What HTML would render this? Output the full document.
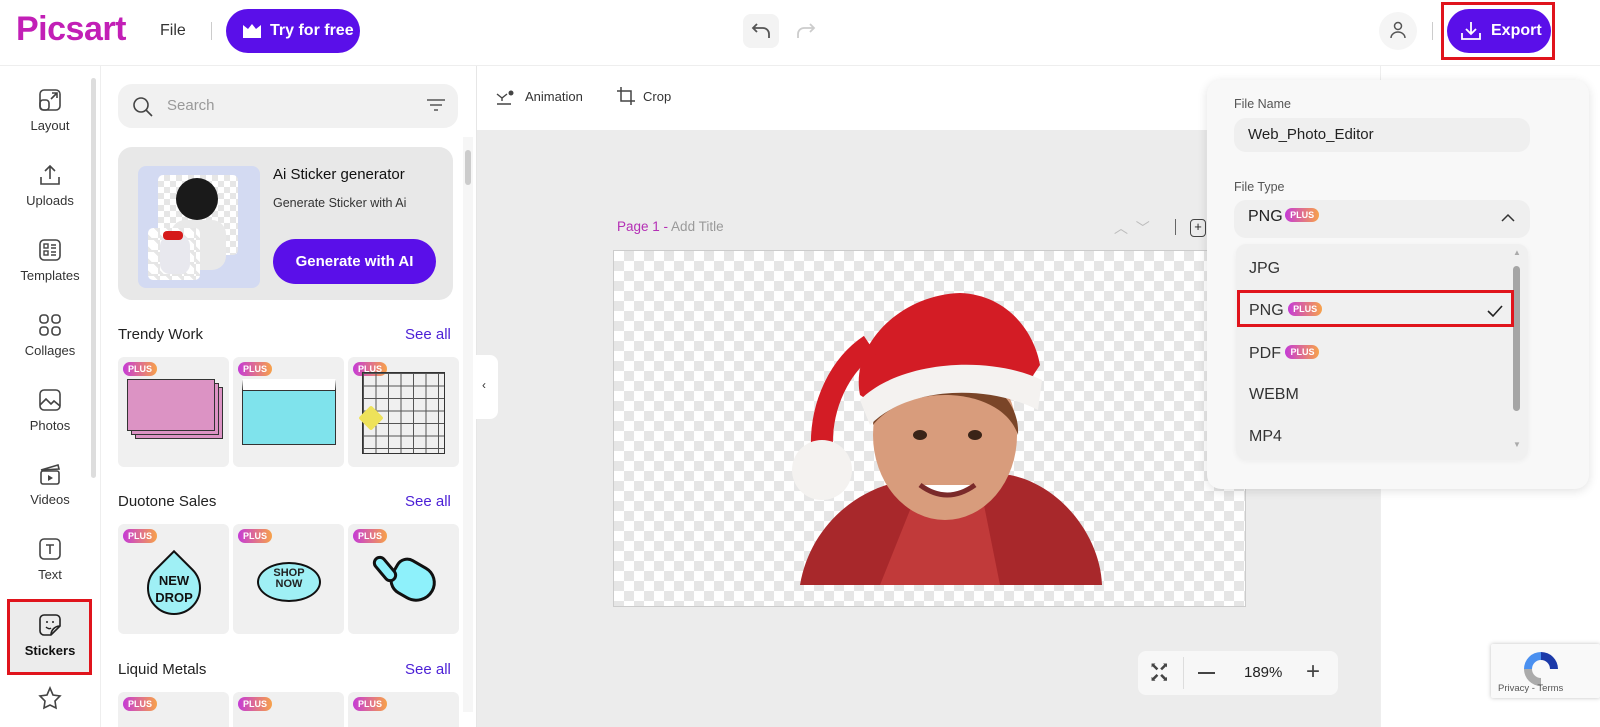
<!DOCTYPE html>
<html style="width:1600px;height:727px;overflow:hidden"><head><meta charset="utf-8"><style>
*{box-sizing:border-box;margin:0;padding:0}
body{width:1600px;height:727px;overflow:hidden;background:#fff;font-family:"Liberation Sans",sans-serif;color:#222;position:relative}
.abs{position:absolute}
.plus{display:inline-block;background:linear-gradient(90deg,#c53bd6,#f7a24a);color:#fff;font-size:9px;font-weight:bold;border-radius:8px;padding:2px 5px;line-height:10px;vertical-align:top}
.nav{position:absolute;left:0;width:100px;text-align:center;font-size:13px;color:#333}
.nav svg{display:block;margin:0 auto 6px}
.card{position:absolute;width:111px;height:110px;background:#f0f0f0;border-radius:6px;overflow:hidden}
.card .plus{position:absolute;left:5px;top:5px}
.sec{position:absolute;left:118px;font-size:15px;color:#222}
.see{position:absolute;left:405px;font-size:15px;color:#4b1fd6}
.chk{background-color:#fff;background-image:linear-gradient(45deg,#e6e6e6 25%,transparent 25%,transparent 75%,#e6e6e6 75%),linear-gradient(45deg,#e6e6e6 25%,transparent 25%,transparent 75%,#e6e6e6 75%);background-size:20px 20px;background-position:0 0,10px 10px}
.opt{position:absolute;left:1249px;font-size:16px;color:#333}
</style></head><body>
<div class="abs" style="left:0;top:0;width:1600px;height:66px;border-bottom:1px solid #eee;background:#fff"></div>
<div class="abs" style="left:16px;top:10px;font-size:34px;font-weight:bold;color:#c21fb6;letter-spacing:-0.5px">Picsart</div>
<div class="abs" style="left:160px;top:22px;font-size:16px;color:#333">File</div>
<div class="abs" style="left:211px;top:22px;width:1px;height:18px;background:#ccc"></div>
<div class="abs" style="left:226px;top:9px;width:134px;height:44px;border-radius:22px;background:#5a0fe9;color:#fff;font-weight:bold;font-size:16px;line-height:44px;padding-left:44px">Try for free</div>
<svg class="abs" style="left:242px;top:23px" width="20" height="16"><path d="M1 2l5 4 4-5 4 5 5-4v13H1z" fill="#fff"/></svg>
<div class="abs" style="left:743px;top:14px;width:36px;height:34px;border-radius:8px;background:#f3f3f3"></div>
<svg class="abs" style="left:751px;top:21px" width="22" height="20"><path d="M6 3L2 7l4 4M2 7h10a6 6 0 016 6v4" fill="none" stroke="#555" stroke-width="1.8"/></svg>
<svg class="abs" style="left:794px;top:21px" width="22" height="20"><path d="M16 3l4 4-4 4M20 7H10a6 6 0 00-6 6v4" fill="none" stroke="#ccc" stroke-width="1.8"/></svg>
<div class="abs" style="left:1379px;top:12px;width:38px;height:38px;border-radius:50%;background:#f5f5f5"></div>
<svg class="abs" style="left:1388px;top:20px" width="20" height="20"><circle cx="10" cy="6" r="3.5" fill="none" stroke="#555" stroke-width="1.5"/><path d="M3 18a7 6 0 0114 0" fill="none" stroke="#555" stroke-width="1.5"/></svg>
<div class="abs" style="left:1432px;top:22px;width:1px;height:18px;background:#ccc"></div>
<div class="abs" style="left:1441px;top:2px;width:114px;height:58px;border:3px solid #e0141c"></div>
<div class="abs" style="left:1447px;top:9px;width:104px;height:44px;border-radius:22px;background:#5a0fe9;color:#fff;font-weight:bold;font-size:16px;line-height:44px;padding-left:44px">Export</div>
<svg class="abs" style="left:1460px;top:20px" width="22" height="22"><path d="M11 2v12M6 9l5 5 5-5M2 13v6h18v-6" fill="none" stroke="#fff" stroke-width="1.8"/></svg>

<div class="abs" style="left:91px;top:78px;width:5px;height:400px;border-radius:3px;background:#ddd"></div>
<div class="abs" style="left:100px;top:66px;width:1px;height:661px;background:#eee"></div>
<div class="nav" style="top:88px"><svg width="24" height="24"><rect x="2" y="2" width="20" height="20" rx="4" fill="none" stroke="#444" stroke-width="1.6"/><rect x="2" y="12" width="9" height="10" rx="3" fill="none" stroke="#444" stroke-width="1.6"/><path d="M13 11l6-6M14 5h5v5" fill="none" stroke="#444" stroke-width="1.6"/></svg>Layout</div>
<div class="nav" style="top:163px"><svg width="24" height="24"><path d="M12 16V3M7 8l5-5 5 5M3 14v7h18v-7" fill="none" stroke="#444" stroke-width="1.6"/></svg>Uploads</div>
<div class="nav" style="top:238px"><svg width="24" height="24"><rect x="2" y="2" width="20" height="20" rx="4" fill="none" stroke="#444" stroke-width="1.6"/><rect x="6" y="6" width="4" height="4" fill="none" stroke="#444" stroke-width="1.4"/><rect x="6" y="13" width="4" height="4" fill="none" stroke="#444" stroke-width="1.4"/><path d="M13 7h5M13 10h5M13 14h5M13 17h5" stroke="#444" stroke-width="1.4"/></svg>Templates</div>
<div class="nav" style="top:313px"><svg width="24" height="24"><rect x="2" y="2" width="8" height="8" rx="3" fill="none" stroke="#444" stroke-width="1.6"/><rect x="14" y="2" width="8" height="8" rx="3" fill="none" stroke="#444" stroke-width="1.6"/><rect x="2" y="14" width="8" height="8" rx="3" fill="none" stroke="#444" stroke-width="1.6"/><rect x="14" y="14" width="8" height="8" rx="3" fill="none" stroke="#444" stroke-width="1.6"/></svg>Collages</div>
<div class="nav" style="top:388px"><svg width="24" height="24"><rect x="2" y="2" width="20" height="20" rx="4" fill="none" stroke="#444" stroke-width="1.6"/><path d="M2 17l6-6 5 5 3-3 6 5" fill="none" stroke="#444" stroke-width="1.6"/></svg>Photos</div>
<div class="nav" style="top:462px"><svg width="24" height="24"><rect x="3" y="9" width="18" height="13" rx="2" fill="none" stroke="#444" stroke-width="1.6"/><path d="M3 8l17-5 1 4z" fill="none" stroke="#444" stroke-width="1.6"/><path d="M10 13v6l5-3z" fill="#444"/></svg>Videos</div>
<div class="nav" style="top:537px"><svg width="24" height="24"><rect x="2" y="2" width="20" height="20" rx="4" fill="none" stroke="#444" stroke-width="1.6"/><path d="M8 8h8M12 8v9" stroke="#444" stroke-width="1.6"/></svg>Text</div>
<div class="abs" style="left:7px;top:599px;width:85px;height:76px;background:#ececec;border:3px solid #e0141c"></div>
<div class="nav" style="top:613px;font-weight:bold;color:#111"><svg width="24" height="24"><path d="M22 13V6a4 4 0 00-4-4H6a4 4 0 00-4 4v12a4 4 0 004 4h7z M22 13c-5 0-9 4-9 9" fill="none" stroke="#222" stroke-width="1.6"/><circle cx="9" cy="9" r="1" fill="#222"/><circle cx="15" cy="9" r="1" fill="#222"/><path d="M8 14c2 2 4 2 5 1" fill="none" stroke="#222" stroke-width="1.4"/></svg>Stickers</div>
<svg class="abs" style="left:38px;top:686px" width="24" height="24"><path d="M12 2l3 7 7 1-5 5 1 7-6-3-6 3 1-7-5-5 7-1z" fill="none" stroke="#444" stroke-width="1.6"/></svg>

<div class="abs" style="left:118px;top:84px;width:340px;height:44px;border-radius:14px;background:#f1f1f1"></div>
<svg class="abs" style="left:132px;top:96px" width="22" height="22"><circle cx="9" cy="9" r="7" fill="none" stroke="#444" stroke-width="1.6"/><path d="M14 14l6 6" stroke="#444" stroke-width="1.6"/></svg>
<div class="abs" style="left:167px;top:97px;font-size:15px;color:#999">Search</div>
<svg class="abs" style="left:426px;top:98px" width="20" height="16"><path d="M1 2h18M4 7h12M8 12h4" stroke="#555" stroke-width="1.5"/></svg>
<div class="abs" style="left:463px;top:137px;width:10px;height:575px;background:#f6f6f6"></div>
<div class="abs" style="left:465px;top:150px;width:6px;height:35px;border-radius:3px;background:#ccc"></div>
<div class="abs" style="left:118px;top:147px;width:335px;height:153px;border-radius:14px;background:#e8e8e8"></div>
<div class="abs" style="left:138px;top:166px;width:122px;height:122px;border-radius:8px;background:#d3daf2"></div>
<div class="abs chk" style="left:158px;top:175px;width:80px;height:80px;border-radius:5px;background-size:12px 12px;background-position:0 0,6px 6px"></div>
<div class="abs" style="left:176px;top:178px;width:42px;height:42px;border-radius:50%;background:#1a1a1a"></div>
<div class="abs" style="left:171px;top:220px;width:55px;height:50px;border-radius:14px;background:#e9e9e9"></div>
<div class="abs chk" style="left:148px;top:228px;width:52px;height:52px;border-radius:5px;background-size:12px 12px"></div>
<div class="abs" style="left:160px;top:236px;width:30px;height:38px;border-radius:10px;background:#e8e8ee"></div>
<div class="abs" style="left:163px;top:231px;width:20px;height:9px;background:#d51a1a;border-radius:4px"></div>
<div class="abs" style="left:273px;top:166px;font-size:15px;color:#111">Ai Sticker generator</div>
<div class="abs" style="left:273px;top:196px;font-size:12.5px;color:#333">Generate Sticker with Ai</div>
<div class="abs" style="left:273px;top:239px;width:163px;height:45px;border-radius:23px;background:#5a0fe9;color:#fff;font-weight:bold;font-size:15px;line-height:45px;text-align:center">Generate with AI</div>

<div class="sec" style="top:326px">Trendy Work</div><div class="see" style="top:326px">See all</div>
<div class="card" style="left:118px;top:357px"><span class="plus">PLUS</span><div class="abs" style="left:17px;top:30px;width:88px;height:52px;background:#dc93c4;border:1px solid #333"></div><div class="abs" style="left:13px;top:26px;width:88px;height:52px;background:#dc93c4;border:1px solid #333"></div><div class="abs" style="left:9px;top:22px;width:88px;height:52px;background:#dc93c4;border:1px solid #333"></div></div>
<div class="card" style="left:233px;top:357px"><span class="plus">PLUS</span><div class="abs" style="left:9px;top:22px;width:94px;height:66px;background:#7fe3ec;border:1px solid #333;border-top:11px solid #fff;box-shadow:inset 0 1px 0 #333"></div></div>
<div class="card" style="left:348px;top:357px"><span class="plus">PLUS</span><div class="abs" style="left:14px;top:15px;width:83px;height:82px;border:1px solid #333;background-image:linear-gradient(#555 1px,transparent 1px),linear-gradient(90deg,#555 1px,transparent 1px);background-size:12.5px 12.5px"></div><div class="abs" style="left:14px;top:52px;width:18px;height:18px;background:#eee25a;transform:rotate(45deg);border-radius:2px"></div></div>

<div class="sec" style="top:493px">Duotone Sales</div><div class="see" style="top:493px">See all</div>
<div class="card" style="left:118px;top:524px"><span class="plus">PLUS</span><div class="abs" style="left:29px;top:37px;width:54px;height:54px;border-radius:50% 0 50% 50%;transform:rotate(-45deg);background:#9ff0f5;border:2px solid #111"></div><div class="abs" style="left:30px;top:48px;width:52px;font-weight:900;font-size:13px;line-height:17px;text-align:center;color:#111">NEW<br>DROP</div></div>
<div class="card" style="left:233px;top:524px"><span class="plus">PLUS</span><div class="abs" style="left:24px;top:38px;width:64px;height:40px;border-radius:50%;background:#9ff0f5;border:2px solid #111"></div><div class="abs" style="left:24px;top:44px;width:64px;font-weight:900;font-size:11px;line-height:11px;text-align:center">SHOP<br>NOW</div></div>
<div class="card" style="left:348px;top:524px"><span class="plus">PLUS</span><div class="abs" style="left:42px;top:38px;width:46px;height:38px;border-radius:14px 20px 22px 18px;background:#8ef1fb;border:3px solid #111;transform:rotate(30deg)"></div><div class="abs" style="left:30px;top:30px;width:14px;height:30px;border-radius:7px;background:#8ef1fb;border:3px solid #111;transform:rotate(-40deg)"></div></div>

<div class="sec" style="top:661px">Liquid Metals</div><div class="see" style="top:661px">See all</div>
<div class="card" style="left:118px;top:692px;height:35px;border-radius:6px 6px 0 0"><span class="plus">PLUS</span></div>
<div class="card" style="left:233px;top:692px;height:35px;border-radius:6px 6px 0 0"><span class="plus">PLUS</span></div>
<div class="card" style="left:348px;top:692px;height:35px;border-radius:6px 6px 0 0"><span class="plus">PLUS</span></div>

<div class="abs" style="left:476px;top:66px;width:1px;height:661px;background:#e6e6e6"></div>
<div class="abs" style="left:477px;top:130px;width:903px;height:597px;background:#ececec"></div>
<div class="abs" style="left:476px;top:355px;width:22px;height:64px;background:#fff;border-radius:0 8px 8px 0"></div>
<div class="abs" style="left:482px;top:378px;font-size:12px;color:#333">‹</div>
<svg class="abs" style="left:496px;top:89px" width="22" height="16"><path d="M1 5l5 4 5-4M6 9v3M1 15h14" fill="none" stroke="#444" stroke-width="1.4"/><circle cx="15" cy="4" r="2.5" fill="#444"/></svg>
<div class="abs" style="left:525px;top:89px;font-size:13px;color:#333">Animation</div>
<svg class="abs" style="left:616px;top:86px" width="20" height="20"><path d="M5 1v14h14M1 5h14v14" fill="none" stroke="#444" stroke-width="1.5"/></svg>
<div class="abs" style="left:643px;top:89px;font-size:13px;color:#333">Crop</div>
<div class="abs" style="left:617px;top:219px;font-size:13.5px;color:#999"><span style="color:#b42fb5">Page 1 -</span> Add Title</div>
<div class="abs" style="left:1114px;top:218px;font-size:14px;color:#bbb">︿ &nbsp;﹀</div>
<div class="abs" style="left:1175px;top:219px;width:1px;height:16px;background:#666"></div>
<div class="abs" style="left:1190px;top:219px;width:16px;height:18px;border:1.5px solid #444;border-radius:4px;font-size:13px;line-height:14px;text-align:center">+</div>
<div class="abs chk" style="left:613px;top:250px;width:633px;height:357px;border:1px solid #ccc"></div>
<svg class="abs" style="left:780px;top:285px" width="330" height="302">
<path d="M20 300 C30 240 80 200 130 195 L230 190 C280 200 320 250 322 300 Z" fill="#a8282b"/>
<path d="M100 300 L140 200 L200 200 L220 300 Z" fill="#c13a3a"/>
<ellipse cx="165" cy="150" rx="72" ry="85" fill="#d89c7c"/>
<path d="M93 140 C95 110 130 85 170 88 C210 90 240 115 238 150 C230 125 200 110 165 110 C130 110 105 125 93 140Z" fill="#7a4528"/>
<path d="M80 110 C70 60 120 10 180 8 C230 10 255 50 260 80 L240 110 C200 85 130 85 95 120Z" fill="#d31c25"/>
<path d="M80 115 C120 75 210 70 262 95 L258 125 C210 100 130 100 90 140Z" fill="#f4f2f0"/>
<path d="M90 60 C60 80 40 120 42 165" stroke="#d31c25" stroke-width="22" fill="none"/>
<circle cx="42" cy="185" r="30" fill="#f4f2f0"/>
<ellipse cx="140" cy="150" rx="7" ry="5" fill="#3a2418"/><ellipse cx="195" cy="150" rx="7" ry="5" fill="#3a2418"/>
<path d="M140 200 Q167 220 195 200" stroke="#7a2a2a" stroke-width="5" fill="#fff"/>
</svg>
<div class="abs" style="left:1138px;top:651px;width:200px;height:44px;border-radius:8px;background:#f7f7f7"></div>
<div class="abs" style="left:1183px;top:657px;width:1px;height:32px;background:#ddd"></div>
<div class="abs" style="left:1150px;top:662px;font-size:11px;color:#444;line-height:11px">⬉⬈<br>⬋⬊</div>
<div class="abs" style="left:1198px;top:672px;width:17px;height:1.5px;background:#444"></div>
<div class="abs" style="left:1244px;top:664px;font-size:15px;color:#222">189%</div>
<div class="abs" style="left:1306px;top:658px;font-size:24px;color:#444;font-weight:300">+</div>

<div class="abs" style="left:1380px;top:66px;width:1px;height:661px;background:#eee"></div>

<div class="abs" style="left:1207px;top:80px;width:382px;height:409px;border-radius:14px;background:#f8f8f8;box-shadow:0 2px 10px rgba(0,0,0,.12)"></div>
<div class="abs" style="left:1234px;top:97px;font-size:12.5px;color:#555">File Name</div>
<div class="abs" style="left:1234px;top:118px;width:296px;height:34px;border-radius:12px;background:#efefef;font-size:15px;line-height:34px;padding-left:14px;color:#222">Web_Photo_Editor</div>
<div class="abs" style="left:1234px;top:180px;font-size:12.5px;color:#555">File Type</div>
<div class="abs" style="left:1234px;top:200px;width:296px;height:38px;border-radius:12px;background:#efefef"></div>
<div class="abs" style="left:1248px;top:208px;font-size:16px;color:#222">PNG <span class="plus" style="margin-left:-2px">PLUS</span></div>
<svg class="abs" style="left:1500px;top:212px" width="16" height="12"><path d="M2 9l6-6 6 6" fill="none" stroke="#333" stroke-width="1.5"/></svg>
<div class="abs" style="left:1236px;top:244px;width:292px;height:215px;border-radius:10px;background:#f0f0f0;box-shadow:0 2px 6px rgba(0,0,0,.05)"></div>
<div class="abs" style="left:1513px;top:266px;width:7px;height:145px;border-radius:4px;background:#a5a5a5"></div>
<div class="abs" style="left:1513px;top:248px;font-size:8px;color:#aaa">▲</div>
<div class="abs" style="left:1513px;top:440px;font-size:8px;color:#aaa">▼</div>
<div class="opt" style="top:260px">JPG</div>
<div class="abs" style="left:1237px;top:290px;width:277px;height:37px;border:3px solid #e0141c"></div>
<div class="opt" style="top:302px">PNG <span class="plus">PLUS</span></div>
<svg class="abs" style="left:1486px;top:304px" width="18" height="14"><path d="M2 7l5 5 9-10" fill="none" stroke="#222" stroke-width="1.6"/></svg>
<div class="opt" style="top:345px">PDF <span class="plus">PLUS</span></div>
<div class="opt" style="top:386px">WEBM</div>
<div class="opt" style="top:428px">MP4</div>

<div class="abs" style="left:1491px;top:644px;width:109px;height:54px;background:#f9f9f9;box-shadow:0 0 4px rgba(0,0,0,.25);border-radius:2px"></div>
<svg class="abs" style="left:1520px;top:648px" width="42" height="42"><path d="M21 4a17 17 0 0117 17h-8a9 9 0 00-9-9z" fill="#1c3aa9"/><path d="M4 21A17 17 0 0121 4v8a9 9 0 00-9 9z" fill="#4a90f0"/><path d="M4 21h8a9 9 0 009 9v8A17 17 0 014 21z" fill="#ababab"/></svg>
<div class="abs" style="left:1498px;top:683px;font-size:9.5px;color:#555">Privacy - Terms</div>
</body></html>
